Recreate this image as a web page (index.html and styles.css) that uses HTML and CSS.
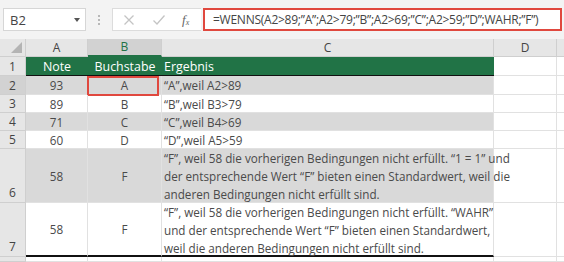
FILE: index.html
```html
<!DOCTYPE html>
<html lang="de">
<head>
<meta charset="utf-8">
<link rel="stylesheet" href="styles.css">
</head>
<body>
<div class="app">
  <div class="toolbar">
    <div class="namebox"><span>B2</span><span class="caret"></span></div>
    <div class="sep"><i></i><i></i><i></i></div>
    <div class="btns">
      <svg class="ic" width="12" height="12" viewBox="0 0 12 12"><path d="M1.5 1.5 L10.5 10.5 M10.5 1.5 L1.5 10.5" stroke="#c4c4c4" stroke-width="1.3" fill="none"/></svg>
      <svg class="ic" width="14" height="12" viewBox="0 0 14 12"><path d="M1.5 6.5 L5 10 L12.5 1.5" stroke="#c4c4c4" stroke-width="1.3" fill="none"/></svg>
      <span class="fx">f<sub>x</sub></span>
    </div>
    <div class="formula"><span class="ftext">=WENNS(A2&gt;89;”A”;A2&gt;79;”B”;A2&gt;69;”C”;A2&gt;59;”D”;WAHR;”F”)</span></div>
  </div>
  <div class="sheet">
    <div class="corner"><span class="tri"></span></div>
    <div class="ch">A</div>
    <div class="ch sel">B</div>
    <div class="ch">C</div>
    <div class="ch">D</div>
    <div class="ch rest"></div>

    <div class="rh">1</div>
    <div class="c hd ctr">Note</div>
    <div class="c hd ctr">Buchstabe</div>
    <div class="c hd">Ergebnis</div>
    <div class="c"></div>
    <div class="c rest"></div>

    <div class="rh sel">2</div>
    <div class="c sh ctr">93</div>
    <div class="c sh ctr active">A</div>
    <div class="c sh">“A”,weil A2&gt;89</div>
    <div class="c"></div>
    <div class="c rest"></div>

    <div class="rh">3</div>
    <div class="c ctr">89</div>
    <div class="c ctr">B</div>
    <div class="c">“B”,weil B3&gt;79</div>
    <div class="c"></div>
    <div class="c rest"></div>

    <div class="rh">4</div>
    <div class="c sh ctr">71</div>
    <div class="c sh ctr">C</div>
    <div class="c sh">“C”,weil B4&gt;69</div>
    <div class="c"></div>
    <div class="c rest"></div>

    <div class="rh">5</div>
    <div class="c ctr">60</div>
    <div class="c ctr">D</div>
    <div class="c">“D”,weil A5&gt;59</div>
    <div class="c"></div>
    <div class="c rest"></div>

    <div class="rh bot">6</div>
    <div class="c sh ctr">58</div>
    <div class="c sh ctr">F</div>
    <div class="c sh wrap">“F”, weil 58 die vorherigen Bedingungen nicht erfüllt. “1 = 1” und<br>der entsprechende Wert “F” bieten einen Standardwert, weil die<br>anderen Bedingungen nicht erfüllt sind.</div>
    <div class="c"></div>
    <div class="c rest"></div>

    <div class="rh bot">7</div>
    <div class="c ctr last">58</div>
    <div class="c ctr last">F</div>
    <div class="c wrap last">“F”, weil 58 die vorherigen Bedingungen nicht erfüllt. “WAHR”<br>und der entsprechende Wert “F” bieten einen Standardwert,<br>weil die anderen Bedingungen nicht erfüllt sind.</div>
    <div class="c"></div>
    <div class="c rest"></div>

    <div class="rh"></div>
    <div class="c"></div>
    <div class="c"></div>
    <div class="c"></div>
    <div class="c"></div>
    <div class="c rest"></div>
  </div>
</div>
</body>
</html>
```
FILE: styles.css
```css
* { box-sizing: border-box; }
html, body { margin: 0; padding: 0; }
body {
  width: 564px;
  height: 262px;
  overflow: hidden;
  background: #fff;
  font-family: "Open Sans", "Noto Sans", sans-serif;
  color: #444;
}
.app { display: flex; flex-direction: column; }
.toolbar {
  height: 39px;
  background: #f3f3f3;
  display: flex;
  align-items: flex-start;
  padding: 8px 2px 0 3px;
}
.namebox {
  width: 83px;
  height: 23px;
  background: #fff;
  border: 1px solid #d6d6d6;
  display: flex;
  align-items: center;
  justify-content: space-between;
  padding: 0 5px 0 6px;
  font-size: 13px;
  color: #444;
}
.caret {
  width: 0; height: 0;
  border-left: 3.5px solid transparent;
  border-right: 3.5px solid transparent;
  border-top: 4px solid #555;
}
.sep {
  width: 26px;
  height: 23px;
  display: flex;
  flex-direction: column;
  align-items: center;
  justify-content: center;
  gap: 2px;
}
.sep i { display: block; width: 2px; height: 2px; background: #b8b8b8; }
.btns {
  width: 89px;
  height: 23px;
  background: #fff;
  border: 1px solid #dcdcdc;
  border-right: none;
  display: flex;
  align-items: center;
  padding-left: 10px;
  gap: 17px;
}
.fx {
  font-family: "Liberation Serif", serif;
  font-style: italic;
  font-size: 13px;
  color: #666;
  margin-left: -1px;
}
.fx sub { font-size: 8px; vertical-align: -1px; }
.formula {
  width: 359px;
  height: 23px;
  margin-left: 2px;
  border: 2px solid #e0483e;
  background: #fff;
  font-size: 12px;
  color: #444;
  padding-left: 8px;
  line-height: 19px;
  white-space: nowrap;
  overflow: hidden;
}
.ftext { letter-spacing: -0.25px; }
.sheet {
  display: grid;
  grid-template-columns: 26px 62px 74px 332px 63px 7px;
  grid-template-rows: 18px 19px 19px 18px 18px 18px 54px 54px 5px;
  background: #fff;
}
.corner {
  background: #e6e6e6;
  border-right: 1px solid #cfcfcf;
  border-bottom: 1px solid #cfcfcf;
  position: relative;
}
.tri {
  position: absolute;
  right: 3px; bottom: 3px;
  width: 0; height: 0;
  border-left: 11px solid transparent;
  border-bottom: 11px solid #b4b4b4;
}
.ch {
  background: #e6e6e6;
  border-right: 1px solid #cfcfcf;
  border-bottom: 1px solid #cfcfcf;
  font-size: 12px;
  color: #444;
  display: flex;
  align-items: center;
  justify-content: center;
  line-height: 1;
}
.ch.sel { background: #d2d2d2; color: #217346; border-bottom: 2px solid #217346; }
.ch.rest { border-right: none; }
.rh {
  background: #e6e6e6;
  border-right: 1px solid #cfcfcf;
  border-bottom: 1px solid #cfcfcf;
  font-size: 12px;
  color: #444;
  display: flex;
  align-items: center;
  justify-content: center;
}
.rh.sel { background: #d2d2d2; }
.rh.bot { align-items: flex-end; padding-bottom: 1px; }
.c {
  border-right: 1px solid #e1e1e1;
  border-bottom: 1px solid #e1e1e1;
  font-size: 11.7px;
  color: #4a4a4a;
  display: flex;
  align-items: center;
  padding-left: 2px;
  white-space: nowrap;
  position: relative;
}
.c.rest { border-right: none; }
.c.ctr { justify-content: center; padding-left: 0; }
.c.hd {
  background: #217346;
  color: #fff;
  font-size: 12.4px;
  border-right: none;
  border-bottom: 1px solid #111;
}
.c.sh { background: #d9d9d9; }
.c.wrap { line-height: 18px; align-items: flex-start; }
.c.last { border-bottom: 2px solid #111; }
.c.active::after {
  content: "";
  position: absolute;
  left: -1px; top: 0; right: 2px; bottom: -2px;
  border: 2px solid #e0483e;
}
```
